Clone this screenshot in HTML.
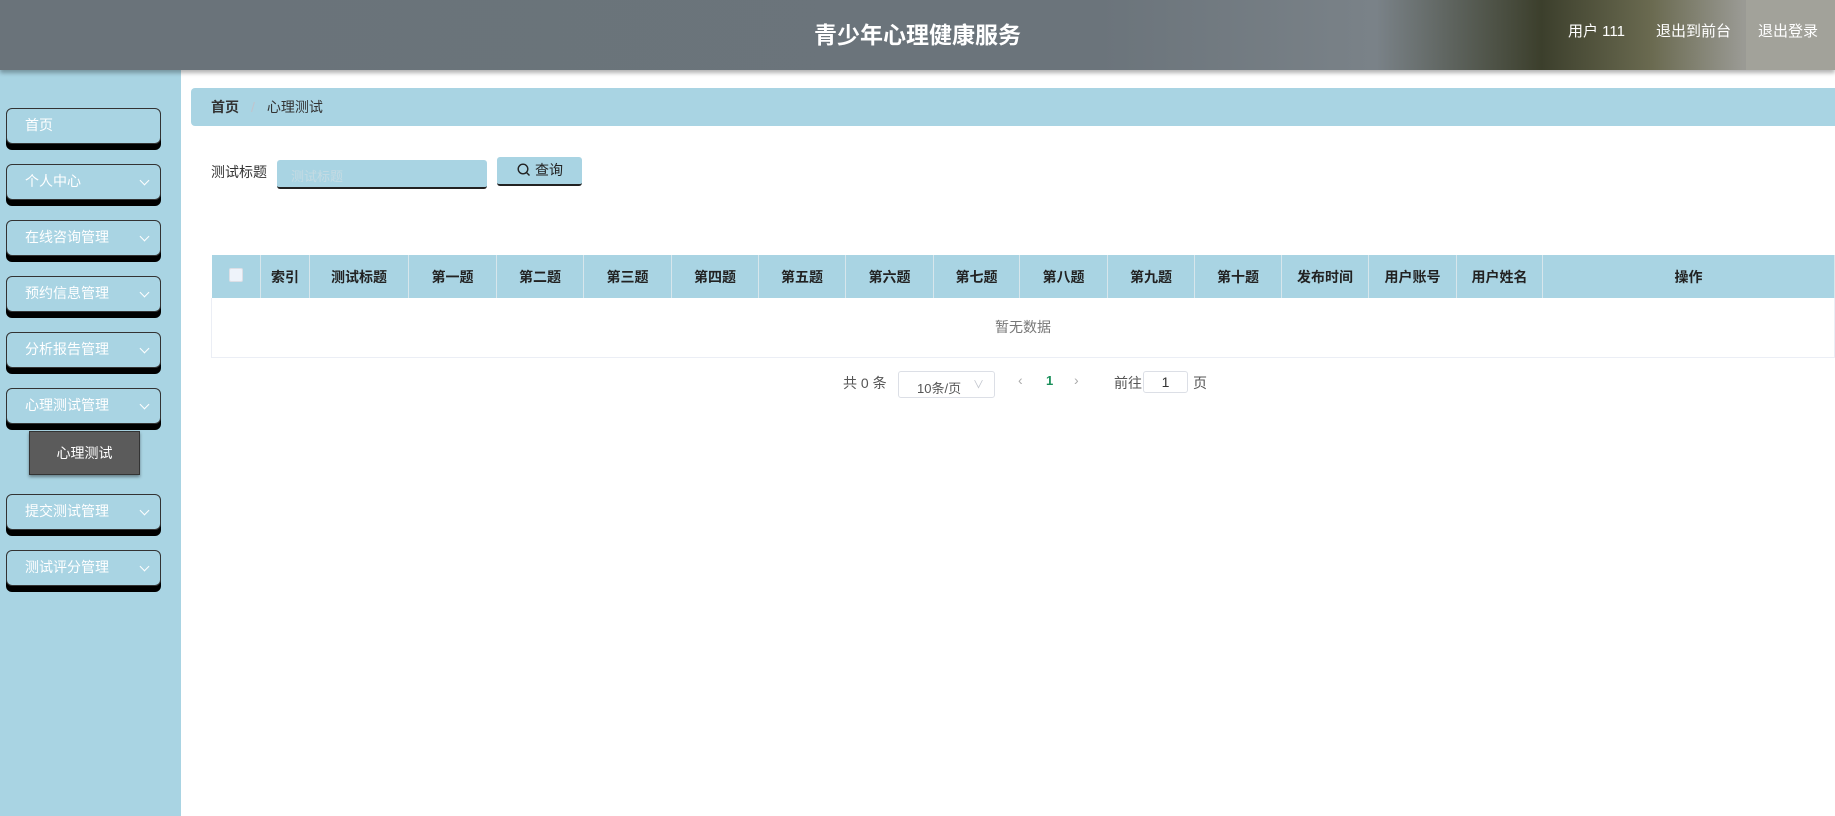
<!DOCTYPE html>
<html><head><meta charset="utf-8"><style>
*{margin:0;padding:0;box-sizing:border-box}
body{width:1835px;height:816px;overflow:hidden;background:#fff;font-family:"Liberation Sans","Noto Sans CJK SC",sans-serif;position:relative}
.hd{position:absolute;left:0;top:0;width:1835px;height:70px;background:linear-gradient(90deg,#6a737a 0%,#6b747b 60%,#7a8288 75%,#3c3f2c 84%,#6a6a50 90%,#9a9a94 95%);box-shadow:0 3px 4px rgba(0,0,0,.3);z-index:2}
.hd .t{position:absolute;left:0;width:1835px;top:16px;text-align:center;color:#fff;font-size:23px;font-weight:bold}
.hd .r{position:absolute;top:20px;color:#fff;font-size:15px}
.sb{position:absolute;left:0;top:70px;width:181px;height:746px;background:#a9d4e3}
.mi{position:absolute;left:6px;width:155px;height:36px;background:#a9d4e3;border:1.5px solid #333;border-radius:6px;box-shadow:0 6px 0 #000;color:#fff;font-size:14px;line-height:33px;padding-left:18px}
.mi .ar{position:absolute;right:12px;top:12px;width:7px;height:7px;border-right:1.3px solid #fff;border-bottom:1.3px solid #fff;transform:rotate(45deg)}
.sub{position:absolute;left:29px;top:431px;width:111px;height:44px;background:#5b5b5b;border:1px solid #333;color:#fff;font-size:14px;line-height:42px;text-align:center;box-shadow:0 2px 3px rgba(0,0,0,.4)}
.bc{position:absolute;left:191px;top:88px;width:1644px;height:38px;background:#a9d4e3;border-radius:4px 0 0 4px;font-size:14px;line-height:38px;padding-left:20px;color:#333}
.lab{position:absolute;left:211px;top:162px;font-size:14px;color:#333}
.inp{position:absolute;left:277px;top:160px;width:210px;height:29px;background:#a9d4e3;border-radius:3px;border-bottom:2px solid #222;font-size:13px;color:#c5dbe3;padding:6px 14px}
.btn{position:absolute;left:497px;top:157px;width:85px;height:29px;background:#a9d4e3;border-radius:3px;border-bottom:2px solid #222;font-size:14px;color:#222;line-height:27px;padding-left:20px}
table{position:absolute;left:211px;top:255px;border-collapse:collapse;width:1624px;table-layout:fixed}
th{background:#a9d4e3;height:43px;font-size:14px;font-weight:bold;color:#222;border-right:1px solid #d7e6ec}
td{height:59px;text-align:center;color:#777;font-size:14px;border:1px solid #ebeef5;border-top:none}
.pg{position:absolute;top:371px;font-size:14px;color:#555}
</style></head><body>
<div class="hd"><div class="t">青少年心理健康服务</div>
<div class="r" style="left:1568px">用户 111</div>
<div class="r" style="left:1656px">退出到前台</div>
<div style="position:absolute;left:1746px;top:0;width:89px;height:70px;background:rgba(170,170,160,.5)"></div>
<div class="r" style="left:1758px">退出登录</div></div>
<div class="sb">
<div class="mi" style="top:38px">首页</div>
<div class="mi" style="top:94px">个人中心<span class="ar"></span></div>
<div class="mi" style="top:150px">在线咨询管理<span class="ar"></span></div>
<div class="mi" style="top:206px">预约信息管理<span class="ar"></span></div>
<div class="mi" style="top:262px">分析报告管理<span class="ar"></span></div>
<div class="mi" style="top:318px">心理测试管理<span class="ar"></span></div>
<div class="mi" style="top:424px">提交测试管理<span class="ar"></span></div>
<div class="mi" style="top:480px">测试评分管理<span class="ar"></span></div>
</div>
<div class="sub">心理测试</div>
<div class="bc"><b>首页</b><span style="color:#c0c4cc;margin:0 12px">/</span>心理测试</div>
<div class="lab">测试标题</div>
<div class="inp">测试标题</div>
<div class="btn"><svg width="14" height="14" viewBox="0 0 14 14" style="vertical-align:-2px;margin-right:4px"><circle cx="6" cy="6" r="4.8" fill="none" stroke="#222" stroke-width="1.4"/><path d="M9.5 9.5L12.5 12.5" stroke="#222" stroke-width="1.4"/></svg>查询</div>
<table><colgroup><col style="width:49px"><col style="width:49px"><col style="width:99px"><col style="width:88px"><col style="width:87px"><col style="width:88px"><col style="width:87px"><col style="width:87px"><col style="width:88px"><col style="width:86px"><col style="width:88px"><col style="width:87px"><col style="width:87px"><col style="width:87px"><col style="width:88px"><col style="width:86px"><col></colgroup>
<tr><th><span style="display:inline-block;width:14px;height:14px;background:#eef3fa;border:1px solid #dcdfe6;border-radius:2px"></span></th><th>索引</th><th>测试标题</th><th>第一题</th><th>第二题</th><th>第三题</th><th>第四题</th><th>第五题</th><th>第六题</th><th>第七题</th><th>第八题</th><th>第九题</th><th>第十题</th><th>发布时间</th><th>用户账号</th><th>用户姓名</th><th>操作</th></tr>
<tr><td colspan="17">暂无数据</td></tr></table>
<div class="pg" style="left:843px;top:373px">共 0 条</div>
<div class="pg" style="left:898px;width:97px;height:27px;border:1px solid #dcdfe6;border-radius:3px;font-size:13px;padding:6px 0 0 18px;color:#555">10条/页<span style="position:absolute;right:10px;top:4px;color:#c0c4cc;font-size:11px">∨</span></div>
<div class="pg" style="left:1018px;top:372px;color:#aaa">‹</div>
<div class="pg" style="left:1046px;top:373px;color:#1a8f5a;font-weight:bold;font-size:13px">1</div>
<div class="pg" style="left:1074px;top:372px;color:#aaa">›</div>
<div class="pg" style="left:1114px;top:373px">前往</div>
<div class="pg" style="left:1143px;width:45px;height:22px;border:1px solid #dcdfe6;border-radius:3px;text-align:center;line-height:20px;top:371px;color:#333">1</div>
<div class="pg" style="left:1193px;top:373px">页</div>
</body></html>
